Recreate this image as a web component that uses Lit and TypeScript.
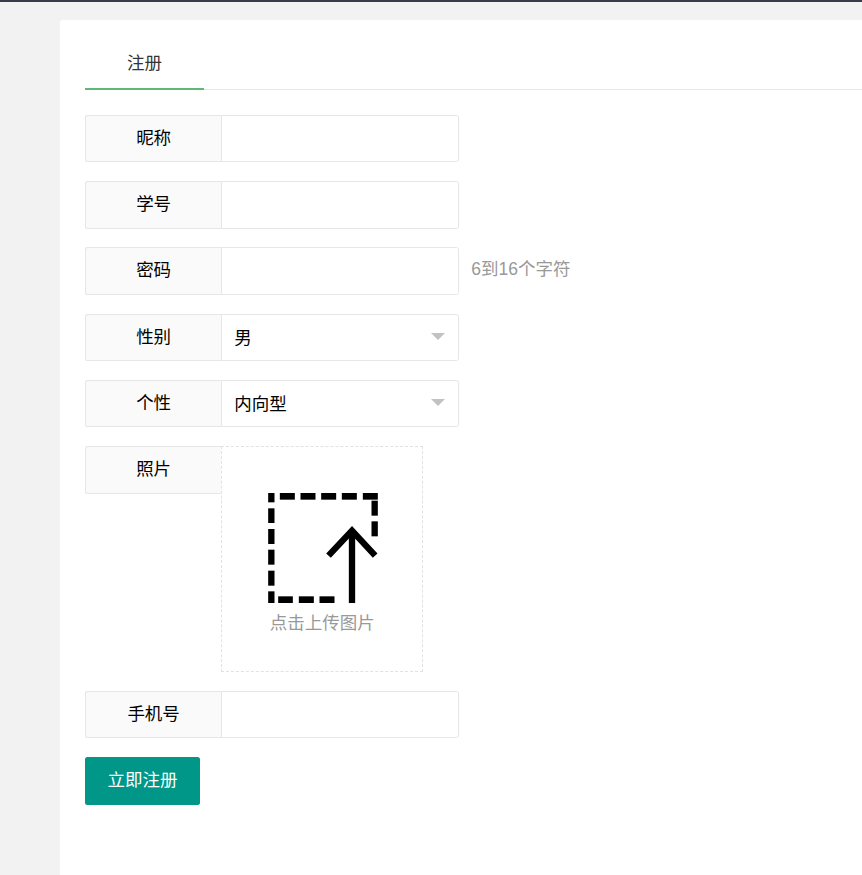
import { LitElement, html, css, svg } from "lit";
import { customElement } from "lit/decorators.js";

const rect = (x: number, y: number, w: number, h: number) =>
  svg`<rect x=${x} y=${y} width=${w} height=${h}></rect>`;

@customElement("app-root")
export class AppRoot extends LitElement {
  static styles = css`
    :host {
      display: block;
      height: 875px;
      overflow: hidden;
      box-sizing: border-box;
      background: #f2f2f2;
      border-top: 2px solid #393d49;
      padding: 18px 0 0 60px;
      font-family: "Liberation Sans", "Noto Sans CJK SC", sans-serif;
      font-size: 17.5px;
      color: #000;
    }
    .card {
      height: 100%;
      background: #fff;
      border-radius: 2.5px 0 0 0;
      padding: 0 0 0 25px;
    }
    .tabs {
      display: flex;
      height: 70px;
      box-sizing: border-box;
      border-bottom: 1px solid #e6e6e6;
      margin-bottom: 24.75px;
    }
    .tab {
      width: 119px;
      height: 70px;
      box-sizing: border-box;
      border-bottom: 2px solid #5fb878;
      padding-top: 18px;
      text-align: center;
      line-height: 50px;
      color: #333;
    }
    .row {
      display: flex;
      align-items: flex-start;
      margin-bottom: 18.75px;
    }
    .label {
      width: 136.25px;
      height: 47.5px;
      flex: none;
      box-sizing: border-box;
      background: #fafafa;
      border: 1px solid #e6e6e6;
      border-right: none;
      border-radius: 2.5px 0 0 2.5px;
      text-align: center;
      line-height: 45px;
    }
    .field {
      position: relative;
      width: 237.5px;
      height: 47.5px;
      flex: none;
      box-sizing: border-box;
      background: #fff;
      border: 1px solid #e6e6e6;
      border-radius: 0 2.5px 2.5px 0;
      padding-left: 12px;
      line-height: 47px;
    }
    .field input {
      width: 100%;
      height: 100%;
      box-sizing: border-box;
      border: none;
      outline: none;
      padding: 0;
      background: transparent;
      font: inherit;
    }
    .arrow {
      position: absolute;
      right: 13px;
      top: 18.5px;
      width: 0;
      height: 0;
      border-style: solid;
      border-width: 7.5px 7px 0;
      border-color: #c2c2c2 transparent transparent;
    }
    .hint {
      margin-left: 12.5px;
      line-height: 45px;
      color: #999;
    }
    .upload {
      width: 202px;
      height: 226px;
      flex: none;
      box-sizing: border-box;
      border: 1px dashed #e2e2e2;
      display: flex;
      flex-direction: column;
      align-items: center;
      padding-top: 45.5px;
      color: #999;
    }
    .upload svg {
      display: block;
      width: 110px;
      height: 110px;
      margin-left: 1px;
      fill: #000;
    }
    .upload p {
      margin: 8.5px 0 0;
      line-height: 25px;
    }
    .submit {
      display: block;
      width: 115px;
      height: 47.5px;
      border: none;
      padding: 0 0 5px;
      border-radius: 2.5px;
      background: #009688;
      color: #fff;
      font: inherit;
    }
  `;

  private inputRow(label: string, hint = "") {
    return html`<div class="row">
      <div class="label">${label}</div>
      <div class="field"><input type="text" /></div>
      ${hint ? html`<div class="hint">${hint}</div>` : ""}
    </div>`;
  }

  private selectRow(label: string, value: string) {
    return html`<div class="row">
      <div class="label">${label}</div>
      <div class="field">${value}<i class="arrow"></i></div>
    </div>`;
  }

  private icon() {
    return html`<svg viewBox="203 157 329 330" aria-hidden="true">
      ${[
        [203, 157, 19, 28], [203, 203, 19, 44], [203, 265, 19, 45],
        [203, 327, 19, 45], [203, 390, 19, 45], [203, 452, 19, 35],
        [238, 157, 45, 20], [300, 157, 45, 20], [362, 157, 45, 20],
        [424, 157, 45, 20], [487, 157, 45, 20],
        [513, 180, 19, 45], [513, 242, 19, 45],
        [233, 467, 44, 20], [295, 467, 45, 20], [357, 467, 45, 20],
        [445, 270, 19, 217],
      ].map(([x, y, w, h]) => svg`${rect(x, y, w, h)}`)}
      <path d="M384 345L454.500 270L524 345" fill="none" stroke="#000" stroke-width="19"></path>
    </svg>`;
  }

  render() {
    return html`<div class="card">
      <div class="tabs"><div class="tab">注册</div></div>
      ${this.inputRow("昵称")}
      ${this.inputRow("学号")}
      ${this.inputRow("密码", "6到16个字符")}
      ${this.selectRow("性别", "男")}
      ${this.selectRow("个性", "内向型")}
      <div class="row">
        <div class="label">照片</div>
        <div class="upload">${this.icon()}<p>点击上传图片</p></div>
      </div>
      ${this.inputRow("手机号")}
      <button class="submit">立即注册</button>
    </div>`;
  }
}
